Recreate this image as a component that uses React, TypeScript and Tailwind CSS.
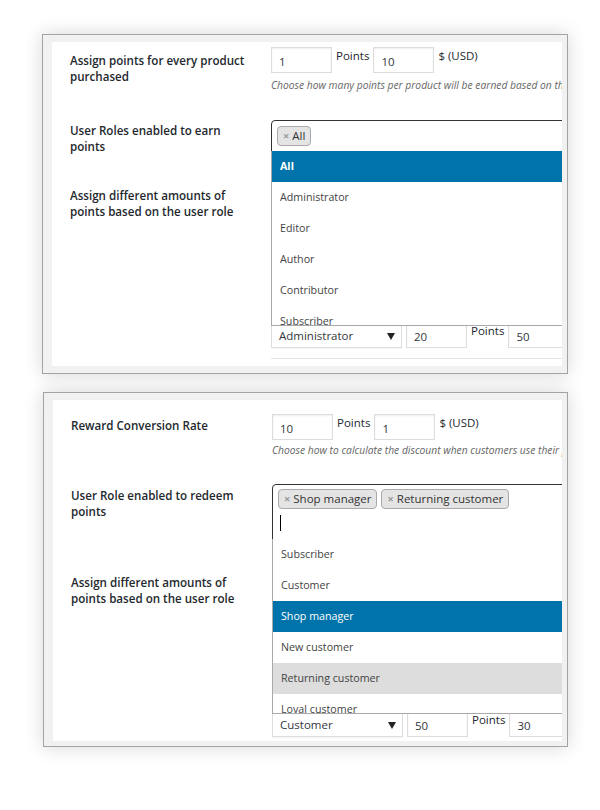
import React from "react";

type Item = { label: string; state?: "active" | "hover"; bold?: boolean };

function NumInput({ value }: { value: string }) {
  return (
    <div className="flex h-[26px] w-[61px] shrink-0 items-center border border-[#dddddd] bg-white pl-[7px] pt-[3px] text-[11.5px] text-[#32373c] shadow-[inset_0_1px_2px_rgba(0,0,0,0.07)]">
      {value}
    </div>
  );
}

function Unit({ text }: { text: string }) {
  return <span className="shrink-0 whitespace-nowrap pt-[1px] text-[11.5px] leading-[16px] text-[#23282d]">{text}</span>;
}

function RateRow({ a, b }: { a: string; b: string }) {
  return (
    <div className="flex items-start gap-[4px]">
      <NumInput value={a} />
      <Unit text="Points" />
      <NumInput value={b} />
      <Unit text="$ (USD)" />
    </div>
  );
}

function RoleRow({ role, a, b }: { role: string; a: string; b: string }) {
  return (
    <div className="flex items-start gap-[4px]">
      <div className="flex h-[26px] w-[131px] shrink-0 items-center justify-between border border-[#dddddd] bg-white pl-[7px] pr-[6px] pt-[2px] text-[11.5px] text-[#32373c] shadow-[0_1px_1px_rgba(0,0,0,0.04)]">
        <span>{role}</span>
        <svg width="8" height="7" viewBox="0 0 8 7">
          <polygon points="0,0 8,0 4,7" fill="#222" />
        </svg>
      </div>
      <NumInput value={a} />
      <Unit text="Points" />
      <NumInput value={b} />
    </div>
  );
}

function Tag({ text }: { text: string }) {
  return (
    <div className="flex h-[20px] shrink-0 items-center gap-[3px] rounded-[4px] border border-[#aaaaaa] bg-[#e4e4e4] px-[5px] text-[11.5px] text-[#333333]">
      <span className="text-[11px] font-bold text-[#999999]">×</span>
      <span>{text}</span>
    </div>
  );
}

function Dropdown({ items }: { items: Item[] }) {
  return (
    <div className="absolute left-[-1px] top-full z-10 h-[175px] w-[360px] overflow-hidden border-b border-l border-[#aaaaaa] bg-white">
      {items.map((it) => (
        <div
          key={it.label}
          className={
            it.state === "active"
              ? "flex h-[31px] items-center bg-[#0073aa] px-[8px] text-[10.7px] text-white"
              : it.state === "hover"
                ? "flex h-[31px] items-center bg-[#dddddd] px-[8px] text-[10.7px] text-[#444444]"
                : "flex h-[31px] items-center px-[8px] text-[10.7px] text-[#444444]"
          }
        >
          <span className={it.bold ? "font-bold" : ""}>{it.label}</span>
        </div>
      ))}
    </div>
  );
}

function Label({ text }: { text: string }) {
  return <div className="w-[180px] text-[11.6px] font-semibold leading-[16px] text-[#23282d]">{text}</div>;
}

export default function App() {
  return (
    <div className="min-h-screen bg-white pt-[34px] font-['Open_Sans','Noto_Sans',sans-serif]">
      {/* first panel: earning points */}
      <div className="ml-[42px] w-[526px] border border-[#a3a3a3] bg-[#f1f1f1] pb-[7px] pl-[9px] pr-[5px] pt-[7px] shadow-[0_0_18px_rgba(0,0,0,0.16)]">
        <div className="overflow-hidden bg-white">
          <div className="flex">
            <div className="w-[219px] shrink-0 pl-[18px] pt-[11px]">
              <Label text="Assign points for every product purchased" />
            </div>
            <div className="min-w-0 flex-1 pb-[28px] pt-[5px]">
              <RateRow a="1" b="10" />
              <p className="mt-[6px] whitespace-nowrap text-[10.3px] italic leading-[12px] text-[#666666]">
                Choose how many points per product will be earned based on the product price
              </p>
            </div>
          </div>

          <div className="flex">
            <div className="w-[219px] shrink-0 pl-[18px] pt-[4px]">
              <Label text="User Roles enabled to earn points" />
            </div>
            <div className="min-w-0 flex-1 pb-[26px] pt-px">
              <div className="relative h-[32px] w-[360px] rounded-t-[4px] border border-[#333333] bg-white px-[5px] pt-[5px]">
                <div className="flex gap-[4px]">
                  <Tag text="All" />
                </div>
                <Dropdown
                  items={[
                    { label: "All", state: "active", bold: true },
                    { label: "Administrator" },
                    { label: "Editor" },
                    { label: "Author" },
                    { label: "Contributor" },
                    { label: "Subscriber" },
                  ]}
                />
              </div>
            </div>
          </div>

          <div className="flex">
            <div className="w-[219px] shrink-0 pl-[18px] pt-[10px]">
              <Label text="Assign different amounts of points based on the user role" />
            </div>
            <div className="min-w-0 flex-1 pb-[7px] pt-[144px]">
              <RoleRow role="Administrator" a="20" b="50" />
              <div className="mt-[10px] h-px bg-[#e5e5e5]" />
            </div>
          </div>
        </div>
      </div>

      {/* second panel: redeeming points */}
      <div className="ml-[43px] mt-[18px] w-[525px] border border-[#a3a3a3] bg-[#f1f1f1] pb-[5px] pl-[9px] pr-[5px] pt-[7px] shadow-[0_0_18px_rgba(0,0,0,0.16)]">
        <div className="overflow-hidden bg-white">
          <div className="flex">
            <div className="w-[219px] shrink-0 pl-[18px] pt-[18px]">
              <Label text="Reward Conversion Rate" />
            </div>
            <div className="min-w-0 flex-1 pb-[28px] pt-[14px]">
              <RateRow a="10" b="1" />
              <p className="mt-[4px] whitespace-nowrap text-[10.3px] italic leading-[12px] text-[#666666]">
                Choose how to calculate the discount when customers use their points
              </p>
            </div>
          </div>

          <div className="flex">
            <div className="w-[219px] shrink-0 pl-[18px] pt-[4px]">
              <Label text="User Role enabled to redeem points" />
            </div>
            <div className="min-w-0 flex-1 pb-[24px]">
              <div className="relative h-[56px] w-[360px] rounded-t-[4px] border border-[#333333] bg-white px-[5px] pt-[4px]">
                <div className="flex gap-[4px]">
                  <Tag text="Shop manager" />
                  <Tag text="Returning customer" />
                </div>
                <div className="mt-[4px] flex h-[20px] items-center pl-[2px]">
                  <div className="h-[16px] w-px bg-black" />
                </div>
                <Dropdown
                  items={[
                    { label: "Subscriber" },
                    { label: "Customer" },
                    { label: "Shop manager", state: "active" },
                    { label: "New customer" },
                    { label: "Returning customer", state: "hover" },
                    { label: "Loyal customer" },
                  ]}
                />
              </div>
            </div>
          </div>

          <div className="flex">
            <div className="w-[219px] shrink-0 pl-[18px] pt-[11px]">
              <Label text="Assign different amounts of points based on the user role" />
            </div>
            <div className="min-w-0 flex-1 pb-[4px] pt-[147px]">
              <RoleRow role="Customer" a="50" b="30" />
            </div>
          </div>
        </div>
      </div>
    </div>
  );
}
